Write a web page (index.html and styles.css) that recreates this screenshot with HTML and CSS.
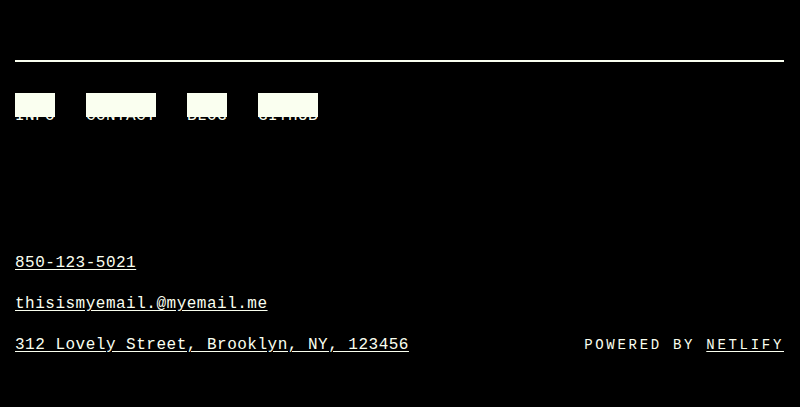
FILE: index.html
```html
<!DOCTYPE html>
<html lang="en">
<head>
<meta charset="utf-8">
<title>Contact</title>
<link rel="stylesheet" href="styles.css">
</head>
<body>
<div class="page">
  <header class="header">
    <hr class="rule">
    <nav class="nav">
      <a class="nav-link" href="#">Info</a>
      <a class="nav-link" href="#">Contact</a>
      <a class="nav-link" href="#">Blog</a>
      <a class="nav-link" href="#">Github</a>
    </nav>
  </header>
  <main class="contacts">
    <div class="line"><a class="link" href="#">850-123-5021</a></div>
    <div class="line"><a class="link" href="#">thisismyemail.@myemail.me</a></div>
    <div class="line last">
      <a class="link" href="#">312 Lovely Street, Brooklyn, NY, 123456</a>
      <span class="powered">Powered by <a class="netlify" href="#">Netlify</a></span>
    </div>
  </main>
</div>
</body>
</html>
```
FILE: styles.css
```css
html, body {
  margin: 0;
  padding: 0;
  background: #000;
}
body {
  color: #fafff0;
  font-family: "Liberation Mono", "DejaVu Sans Mono", monospace;
  font-size: 16px;
  letter-spacing: 0.5px;
}
.page {
  padding: 0 16px 0 15px;
}
.header {
  padding-top: 60px;
}
.rule {
  margin: 0;
  border: 0;
  height: 2px;
  background: #fafff0;
}
.nav {
  display: flex;
  gap: 31px;
  margin-top: 31px;
}
.nav-link {
  display: block;
  box-sizing: border-box;
  height: 24px;
  padding-top: 15px;
  line-height: 16px;
  letter-spacing: 0.4px;
  background: #fafff0;
  color: #fafff0;
  text-decoration: none;
  text-transform: uppercase;
}
.contacts {
  margin-top: 126px;
}
.line {
  line-height: 41px;
}
.last {
  display: flex;
  justify-content: space-between;
  align-items: baseline;
}
.link {
  color: #fafff0;
  text-decoration: underline;
  text-underline-offset: 2px;
}
.powered {
  font-size: 14px;
  letter-spacing: 2.7px;
  text-transform: uppercase;
}
.netlify {
  color: #fafff0;
  text-decoration: underline;
  text-underline-offset: 2px;
}
```
